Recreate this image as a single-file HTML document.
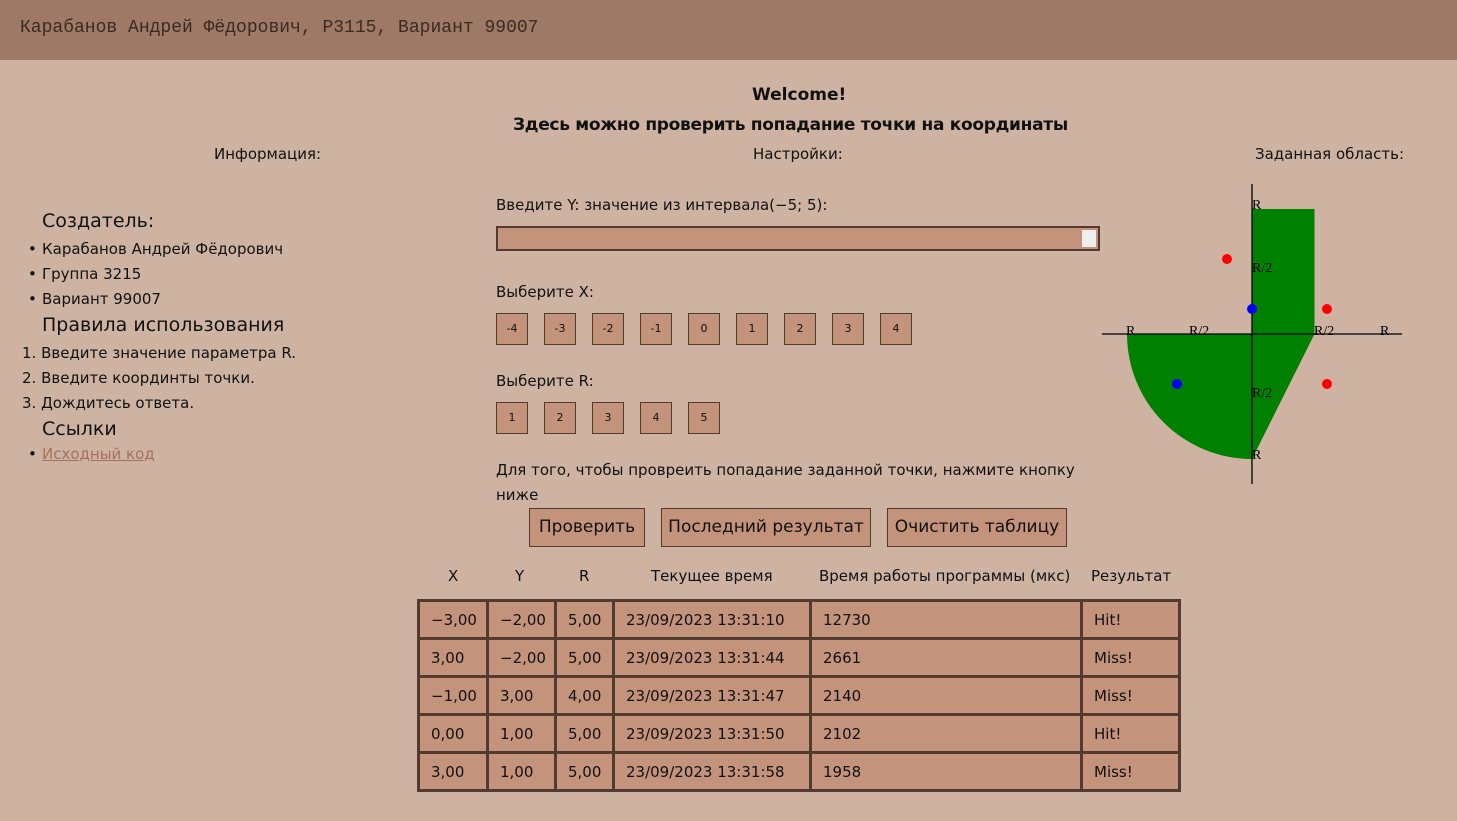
<!DOCTYPE html>
<html><head><meta charset="utf-8"><style>
*{margin:0;padding:0;box-sizing:border-box}
body{width:1457px;height:821px;background:#ceb3a2;font-family:"DejaVu Sans","Liberation Sans",sans-serif;color:#111;position:relative;overflow:hidden;font-size:15px}
.a{position:absolute;white-space:nowrap}
.hd{position:absolute;left:0;top:0;width:1457px;height:60px;background:#9e7966}
.hd span{position:absolute;left:20px;top:18px;font-family:"Liberation Mono",monospace;font-size:18px;color:#3b2a22}
.b{position:absolute;width:32px;height:32px;background:#c4937c;border:1.5px solid #533a2f;font-size:11px;text-align:center;line-height:29px}
.btn{position:absolute;height:39px;top:508px;background:#c4937c;border:1.5px solid #533a2f;font-size:17px;text-align:center;line-height:36px}
table{position:absolute;left:417px;top:599px;border-collapse:collapse;border:3px solid #533a2f;table-layout:fixed;width:761px}
td{border:3px solid #533a2f;background:#c4937c;height:38px;font-size:15px;padding:0 0 0 11px;white-space:nowrap;overflow:hidden}
.th{position:absolute;top:567px;font-size:15px}
ul{position:absolute;list-style:none}
</style></head><body>
<div class="hd"><span>Карабанов Андрей Фёдорович, P3115, Вариант 99007</span></div>
<div class="a" style="left:752px;top:85px;font-weight:bold;font-size:17px">Welcome!</div>
<div class="a" style="left:513px;top:115px;font-weight:bold;font-size:17px;letter-spacing:-0.3px">Здесь можно проверить попадание точки на координаты</div>
<div class="a" style="left:214px;top:145px">Информация:</div>
<div class="a" style="left:753px;top:145px">Настройки:</div>
<div class="a" style="left:1255px;top:145px">Заданная область:</div>

<div class="a" style="left:42px;top:210px;font-size:19px">Создатель:</div>
<div class="a" style="left:28px;top:237px;line-height:25px;font-size:15px">•<br>•<br>•</div>
<div class="a" style="left:42px;top:237px;line-height:25px;font-size:15px">Карабанов Андрей Фёдорович<br>Группа 3215<br>Вариант 99007</div>
<div class="a" style="left:42px;top:314px;font-size:19px">Правила использования</div>
<div class="a" style="left:22px;top:341px;line-height:25px;font-size:15px">1. Введите значение параметра R.<br>2. Введите координты точки.<br>3. Дождитесь ответа.</div>
<div class="a" style="left:42px;top:418px;font-size:19px">Ссылки</div>
<div class="a" style="left:28px;top:445px;font-size:15px">•</div>
<div class="a" style="left:42px;top:445px;font-size:15px"><span style="color:#a8705a;text-decoration:underline">Исходный код</span></div>

<div class="a" style="left:496px;top:196px">Введите Y: значение из интервала(−5; 5):</div>
<div class="a" style="left:496px;top:226px;width:604px;height:25px;background:#c4937c;border:2px solid #533a2f"><div style="position:absolute;right:2px;top:2px;width:14px;height:17px;background:#eee"></div></div>
<div class="a" style="left:496px;top:283px">Выберите X:</div>
<div class="b" style="left:496px;top:313px">-4</div><div class="b" style="left:544px;top:313px">-3</div><div class="b" style="left:592px;top:313px">-2</div><div class="b" style="left:640px;top:313px">-1</div><div class="b" style="left:688px;top:313px">0</div><div class="b" style="left:736px;top:313px">1</div><div class="b" style="left:784px;top:313px">2</div><div class="b" style="left:832px;top:313px">3</div><div class="b" style="left:880px;top:313px">4</div>
<div class="a" style="left:496px;top:372px">Выберите R:</div>
<div class="b" style="left:496px;top:402px">1</div><div class="b" style="left:544px;top:402px">2</div><div class="b" style="left:592px;top:402px">3</div><div class="b" style="left:640px;top:402px">4</div><div class="b" style="left:688px;top:402px">5</div>
<div class="a" style="left:496px;top:458px;line-height:25px">Для того, чтобы провреить попадание заданной точки, нажмите кнопку<br>ниже</div>
<div class="btn" style="left:529px;width:116px">Проверить</div>
<div class="btn" style="left:661px;width:210px">Последний результат</div>
<div class="btn" style="left:887px;width:180px">Очистить таблицу</div>

<div class="th" style="left:448px">X</div><div class="th" style="left:515px">Y</div><div class="th" style="left:579px">R</div><div class="th" style="left:651px">Текущее время</div><div class="th" style="left:819px">Время работы программы (мкс)</div><div class="th" style="left:1091px">Результат</div>
<table>
<colgroup><col style="width:69px"><col style="width:68px"><col style="width:58px"><col style="width:197px"><col style="width:271px"><col style="width:98px"></colgroup>
<tr><td>−3,00</td><td>−2,00</td><td>5,00</td><td>23/09/2023 13:31:10</td><td>12730</td><td>Hit!</td></tr>
<tr><td>3,00</td><td>−2,00</td><td>5,00</td><td>23/09/2023 13:31:44</td><td>2661</td><td>Miss!</td></tr>
<tr><td>−1,00</td><td>3,00</td><td>4,00</td><td>23/09/2023 13:31:47</td><td>2140</td><td>Miss!</td></tr>
<tr><td>0,00</td><td>1,00</td><td>5,00</td><td>23/09/2023 13:31:50</td><td>2102</td><td>Hit!</td></tr>
<tr><td>3,00</td><td>1,00</td><td>5,00</td><td>23/09/2023 13:31:58</td><td>1958</td><td>Miss!</td></tr>
</table>

<svg class="a" style="left:1102px;top:184px" width="300" height="300" viewBox="0 0 300 300" font-family="Liberation Serif,serif" font-size="14">
<rect x="150" y="25" width="62.5" height="125" fill="#008000"/>
<path d="M150 150 L25 150 A125 125 0 0 0 150 275 Z" fill="#008000"/>
<path d="M150 150 L212.5 150 L150 275 Z" fill="#008000"/>
<line x1="0" y1="150" x2="300" y2="150" stroke="#000" stroke-width="1.3"/>
<line x1="150" y1="0" x2="150" y2="300" stroke="#000" stroke-width="1.3"/>
<text x="24" y="151">R</text><text x="87" y="151">R/2</text><text x="212" y="151">R/2</text><text x="278" y="151">R</text>
<text x="150" y="25">R</text><text x="150" y="88">R/2</text><text x="150" y="213">R/2</text><text x="150" y="275">R</text>
<circle cx="125" cy="75" r="5" fill="#f00"/><circle cx="150" cy="125" r="5" fill="#00f"/><circle cx="225" cy="125" r="5" fill="#f00"/><circle cx="75" cy="200" r="5" fill="#00f"/><circle cx="225" cy="200" r="5" fill="#f00"/>
</svg>
</body></html>
